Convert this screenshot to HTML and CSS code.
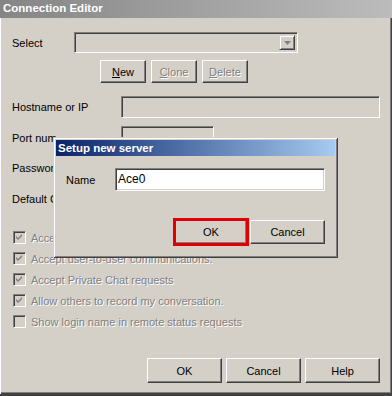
FILE: index.html
```html
<!DOCTYPE html>
<html lang="en">
<head>
    <meta charset="UTF-8">
    <title>Connection Editor</title>
    <link rel="stylesheet" href="styles.css">
</head>
<body>
    <div class="window">
        <div class="titlebar">Connection Editor</div>
        <div class="content">
            <div class="row row-select">
                <span class="lbl lbl-select">Select</span>
                <div class="combo">
                    <span class="combo-btn">
                        <svg width="7" height="4" viewBox="0 0 7 4"><path d="M0 0h7L3.5 4z" fill="#808080"/></svg>
                    </span>
                </div>
            </div>

            <div class="row row-actions">
                <button class="btn btn-sm"><u>N</u>ew</button>
                <button class="btn btn-sm" disabled><u>C</u>lone</button>
                <button class="btn btn-sm" disabled><u>D</u>elete</button>
            </div>

            <div class="row row-host">
                <span class="lbl">Hostname or IP</span>
                <div class="field field-wide"></div>
            </div>
            <div class="row row-port">
                <span class="lbl"><span class="lbl-cut">Port number</span></span>
                <div class="field field-short"></div>
            </div>
            <div class="row row-pass">
                <span class="lbl">Password</span>
                <div class="field field-short"></div>
            </div>
            <div class="row row-default">
                <span class="lbl">Default Channel</span>
                <div class="field field-short"></div>
            </div>

            <div class="checks">
                <div class="check"><span class="box checked"></span><span class="check-text">Accept incoming connections.</span></div>
                <div class="check"><span class="box checked"></span><span class="check-text">Accept user-to-user communications.</span></div>
                <div class="check"><span class="box checked"></span><span class="check-text">Accept Private Chat requests</span></div>
                <div class="check"><span class="box checked"></span><span class="check-text">Allow others to record my conversation.</span></div>
                <div class="check"><span class="box"></span><span class="check-text">Show login name in remote status requests</span></div>
            </div>

            <div class="footer">
                <button class="btn btn-lg">OK</button>
                <button class="btn btn-lg">Cancel</button>
                <button class="btn btn-lg">Help</button>
            </div>
        </div>

        <div class="modal">
            <div class="modal-title">Setup new server</div>
            <div class="modal-row">
                <span class="modal-lbl">Name</span>
                <div class="field field-name">Ace0</div>
            </div>
            <div class="modal-actions">
                <button class="btn btn-ok">OK</button>
                <button class="btn btn-lg">Cancel</button>
            </div>
        </div>
    </div>
</body>
</html>
```

FILE: styles.css
```css
body {
    margin: 0;
    padding: 0;
    background: #404040;
    font-family: "Liberation Sans", Arial, sans-serif;
    font-size: 11px;
    color: #000;
    overflow: hidden;
}

.window {
    position: relative;
    width: 392px;
    height: 394px;
    background: #d4d0c8;
    box-shadow: inset 1px 1px #ffffff, inset -1px -1px #404040, inset -2px -2px #808080;
    overflow: hidden;
}

.titlebar {
    height: 18px;
    line-height: 17px;
    padding-left: 3px;
    background: linear-gradient(to right, #858585, #bcbcbc);
    color: #fff;
    font-weight: bold;
    font-size: 11.5px;
}

.content {
    padding-left: 12px;
}

.row {
    display: flex;
    align-items: center;
}

.lbl {
    width: 109px;
    flex: none;
    white-space: nowrap;
}

.lbl-select {
    width: 62px;
}

/* le libellé est recouvert par la fenêtre modale */
.lbl-cut {
    display: inline-block;
    width: 44px;
    overflow: hidden;
    vertical-align: top;
}

.row-select {
    margin-top: 14px;
    height: 21px;
}

.row-actions {
    margin-top: 7px;
    margin-left: 88px;
    gap: 5px;
}

.row-host {
    margin-top: 13px;
}

.row-port {
    margin-top: 8px;
    align-items: flex-start;
}

.row-port .lbl {
    padding-top: 6px;
}

.row-pass {
    margin-top: 10px;
}

.row-default {
    margin-top: 10px;
}

/* champs creusés */
.field,
.combo {
    box-sizing: border-box;
    border: 1px solid;
    border-color: #808080 #ffffff #ffffff #808080;
    box-shadow: inset 1px 1px #404040, inset -1px -1px #d4d0c8;
    background: #d4d0c8;
}

.field-wide {
    width: 259px;
    height: 22px;
}

.field-short {
    width: 93px;
    height: 21px;
}

.combo {
    width: 224px;
    height: 21px;
    display: flex;
    justify-content: flex-end;
    padding: 2px;
}

.combo-btn {
    width: 16px;
    height: 15px;
    box-sizing: border-box;
    border: 1px solid;
    border-color: #d4d0c8 #404040 #404040 #d4d0c8;
    box-shadow: inset 1px 1px #fff, inset -1px -1px #808080;
    display: flex;
    align-items: center;
    justify-content: center;
}

/* boutons */
.btn {
    box-sizing: border-box;
    font-family: "Liberation Sans", Arial, sans-serif;
    font-size: 11px;
    color: #000;
    background: #d4d0c8;
    border: 1px solid;
    border-color: #ffffff #404040 #404040 #ffffff;
    box-shadow: inset -1px -1px #808080;
    padding: 0;
}

.btn:disabled {
    color: #808080;
    text-shadow: 1px 1px #fff;
}

.btn-sm {
    width: 46px;
    height: 23px;
}

.btn-lg {
    width: 75px;
    height: 25px;
}

/* cases à cocher */
.checks {
    margin-top: 18px;
}

.check {
    height: 21px;
    display: flex;
    align-items: center;
}

.box {
    width: 13px;
    height: 13px;
    box-sizing: border-box;
    margin-left: 1px;
    border: 1px solid;
    border-color: #808080 #ffffff #ffffff #808080;
    box-shadow: inset 1px 1px #404040, inset -1px -1px #d4d0c8;
    background: #d4d0c8;
}

.box.checked {
    background: #d4d0c8 url("data:image/svg+xml,%3Csvg xmlns='http://www.w3.org/2000/svg' width='11' height='11'%3E%3Cpath d='M2 4l2 2 4-4v2l-4 4-2-2z' fill='%23808080'/%3E%3C/svg%3E") no-repeat center;
}

.check-text {
    margin-left: 5px;
    color: #808080;
    text-shadow: 1px 1px #fff;
    white-space: nowrap;
}

.footer {
    display: flex;
    justify-content: flex-end;
    gap: 4px;
    margin-top: 26px;
    padding-right: 12px;
}

/* fenêtre modale */
.modal {
    position: absolute;
    left: 53px;
    top: 137px;
    width: 285px;
    height: 121px;
    box-sizing: border-box;
    padding: 3px;
    background: #d4d0c8;
    box-shadow: inset 1px 1px #d4d0c8, inset -1px -1px #404040, inset 2px 2px #ffffff, inset -2px -2px #808080;
}

.modal-title {
    height: 16px;
    line-height: 16px;
    padding-left: 2px;
    background: linear-gradient(to right, #0a246a, #a6caf0);
    color: #fff;
    font-weight: bold;
    font-size: 11.5px;
}

.modal-row {
    display: flex;
    align-items: center;
    margin-top: 12px;
    padding-left: 10px;
}

.modal-lbl {
    width: 49px;
}

.field-name {
    width: 210px;
    height: 23px;
    background: #fff;
    padding: 3px 0 0 2px;
    font-size: 12px;
    line-height: 14px;
}

.modal-actions {
    display: flex;
    align-items: center;
    margin-top: 29px;
    padding-left: 119px;
    gap: 3px;
}

.modal-actions .btn-lg {
    height: 24px;
}

.btn-ok {
    width: 72px;
    height: 24px;
    outline: 3px solid #e00000;
    outline-offset: -1px;
}
```
